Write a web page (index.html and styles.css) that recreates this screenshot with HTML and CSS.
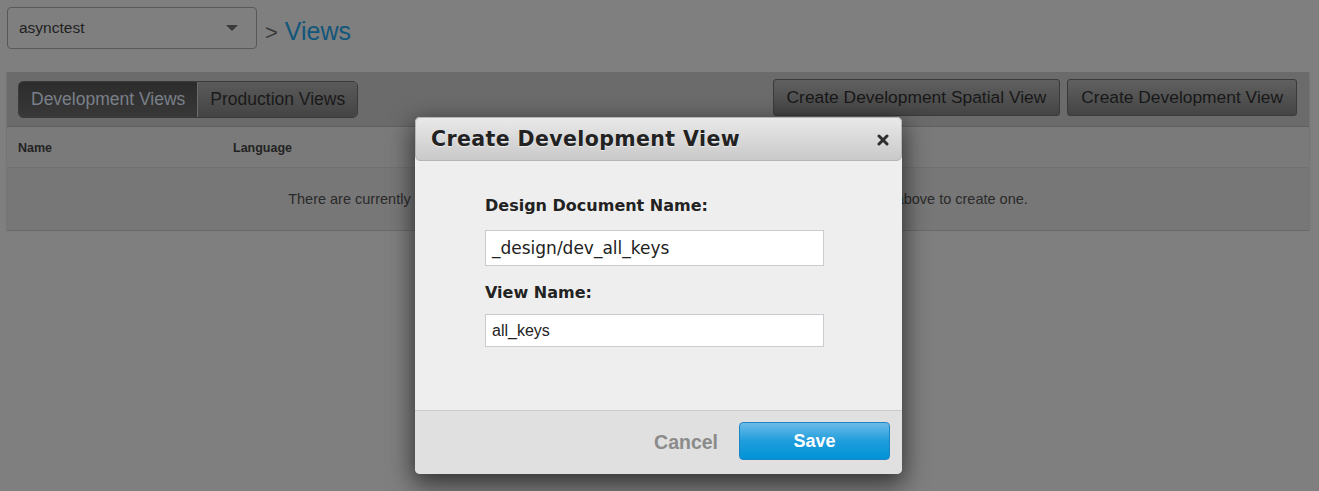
FILE: index.html
```html
<!DOCTYPE html>
<html>
<head>
<meta charset="utf-8">
<link rel="stylesheet" href="styles.css">
</head>
<body>
<div class="page">
  <div class="topbar">
    <div class="select">
      <span class="select-text">asynctest</span>
      <span class="caret"></span>
    </div>
    <div class="crumb"><span class="gt">&gt;</span> <span class="crumb-link">Views</span></div>
  </div>

  <div class="panel">
    <div class="toolbar">
      <div class="tabs">
        <div class="tab tab-active">Development Views</div>
        <div class="tab">Production Views</div>
      </div>
      <div class="actions">
        <div class="btn">Create Development Spatial View</div>
        <div class="btn">Create Development View</div>
      </div>
    </div>
    <div class="thead">
      <div class="th th-name">Name</div>
      <div class="th">Language</div>
    </div>
    <div class="tbody"><span>There are currently&nbsp;</span><span class="tbody-mid">no Development Views in this bucket. Use the &quot;Create Development View&quot; button</span><span>&nbsp;above to create one.</span></div>
  </div>
</div>

<div class="modal">
  <div class="modal-head">
    <h2 class="modal-title">Create Development View</h2>
    <svg class="close" width="12" height="12" viewBox="0 0 12 12" aria-label="close">
      <path d="M2 2 L10 10 M10 2 L2 10" stroke="#2e2e2e" stroke-width="3" stroke-linecap="round"/>
    </svg>
  </div>
  <div class="modal-body">
    <div class="field">
      <label class="label label-doc">Design Document Name:</label>
      <div class="input input-doc">_design/dev_all_keys</div>
    </div>
    <div class="field field-view">
      <label class="label label-view">View Name:</label>
      <div class="input input-view">all_keys</div>
    </div>
  </div>
  <div class="modal-foot">
    <span class="cancel">Cancel</span>
    <div class="save">Save</div>
  </div>
</div>
</body>
</html>
```

FILE: styles.css
```css
html, body {
  margin: 0;
  padding: 0;
  background: #7f7f7f;
  font-family: "Liberation Sans", Arial, sans-serif;
}
.page {
  padding: 7px 10px 0 7px;
}
.topbar {
  display: flex;
  align-items: center;
  height: 42px;
}
.select {
  box-sizing: border-box;
  width: 250px;
  height: 42px;
  border: 1px solid #595959;
  border-radius: 4px;
  display: flex;
  align-items: center;
  justify-content: space-between;
  padding: 0 18px 0 11px;
  background: #7f7f7f;
}
.select-text {
  font-size: 15.5px;
  color: #1f1f1f;
}
.caret {
  width: 0;
  height: 0;
  border-left: 6px solid transparent;
  border-right: 6px solid transparent;
  border-top: 6px solid #3a3a3a;
}
.crumb {
  margin-left: 8px;
  margin-top: 6px;
  font-size: 25px;
}
.gt {
  color: #3a3a3a;
  font-size: 22px;
}
.crumb-link {
  color: #11567b;
}
.panel {
  margin-top: 23px;
  background: #777777;
  box-shadow: 0 1px 2px rgba(0,0,0,0.25);
  border-bottom: 1px solid #6a6a6a;
}
.toolbar {
  height: 55px;
  background: #6b6b6b;
  border-bottom: 1px solid #606060;
  display: flex;
  justify-content: space-between;
  padding: 0 12px 0 11px;
  box-sizing: border-box;
}
.tabs {
  display: flex;
  margin-top: 9px;
  height: 37px;
  border-radius: 5px;
  overflow: hidden;
  border: 1px solid #3a3a3a;
  box-sizing: border-box;
}
.tab {
  font-size: 17.5px;
  padding: 0 12px 0 12px;
  display: flex;
  align-items: center;
  color: #1a1a1a;
  background: linear-gradient(#5a5a5a, #444444);
}
.tab-active {
  color: #7a8089;
  background: linear-gradient(#2c2c2c, #383838);
  border-right: 1px solid #6c6c6c;
}
.actions {
  display: flex;
  gap: 7px;
  margin-top: 7px;
}
.btn {
  height: 37px;
  box-sizing: border-box;
  border: 1px solid #3a3a3a;
  border-radius: 3px;
  background: linear-gradient(#606060, #444444);
  font-size: 17.4px;
  color: #181818;
  padding: 0 13px;
  display: flex;
  align-items: center;
}
.thead {
  display: flex;
  height: 40px;
  align-items: center;
  background: #7a7a7a;
  border-bottom: 1px solid #717171;
  padding-left: 11px;
}
.th {
  font-size: 12.5px;
  font-weight: bold;
  color: #232323;
  padding-top: 2px;
}
.th-name {
  width: 215px;
}
.tbody {
  height: 62px;
  display: flex;
  align-items: center;
  justify-content: center;
  font-size: 14.5px;
  color: #2a2a2a;
  white-space: pre;
}
.tbody-mid {
  letter-spacing: -0.58px;
}
.modal {
  position: absolute;
  left: 415px;
  top: 117px;
  width: 487px;
  background: #eeeeee;
  border-radius: 5px;
  box-shadow: 0 8px 24px 2px rgba(0,0,0,0.6);
}
.modal-head {
  height: 44px;
  box-sizing: border-box;
  display: flex;
  align-items: center;
  justify-content: space-between;
  padding: 0 12px 0 15px;
  background: linear-gradient(#e9e9e9, #c9c9c9);
  border: 1px solid #b5b5b5;
  border-radius: 5px;
}
.modal-title {
  margin: 0;
  font-family: "DejaVu Sans", Verdana, sans-serif;
  font-size: 20.5px;
  font-weight: bold;
  color: #222222;
  text-shadow: 0 1px 1px rgba(255,255,255,0.6);
  letter-spacing: 0.4px;
}
.close {
  display: block;
  margin-top: 2px;
}
.modal-body {
  padding: 35px 78px 63px 70px;
  border-bottom: 1px solid #c9cccc;
  box-shadow: 0 1px 0 #f6f6f6;
}
.field-view {
  margin-top: 17px;
}
.label {
  display: block;
  font-family: "DejaVu Sans", Verdana, sans-serif;
  font-size: 16px;
  font-weight: bold;
  color: #222222;
}
.label-doc {
  margin-bottom: 15px;
}
.label-view {
  margin-bottom: 12px;
}
.input {
  width: 339px;
  box-sizing: border-box;
  background: #ffffff;
  border: 1px solid #c8ccd0;
  padding: 0 6px;
  display: flex;
  align-items: center;
  color: #222;
}
.input-doc {
  height: 36px;
  font-family: "DejaVu Sans", Verdana, sans-serif;
  font-size: 17px;
}
.input-view {
  height: 33px;
  font-family: "Liberation Sans", Arial, sans-serif;
  font-size: 16px;
}
.modal-foot {
  height: 63px;
  box-sizing: border-box;
  background: #dfe0df;
  display: flex;
  align-items: flex-start;
  justify-content: flex-end;
  padding: 11px 12px 0 0;
  border-radius: 0 0 5px 5px;
  gap: 21px;
}
.cancel {
  font-size: 19.5px;
  font-weight: bold;
  color: #8b8b8b;
  margin-top: 9px;
}
.save {
  width: 151px;
  height: 38px;
  box-sizing: border-box;
  border: 1px solid #1f84c4;
  border-radius: 4px;
  background: linear-gradient(#6cbbe8, #1f9ddc 50%, #0093d7);
  color: #ffffff;
  font-size: 18px;
  font-weight: bold;
  display: flex;
  align-items: center;
  justify-content: center;
}
```
